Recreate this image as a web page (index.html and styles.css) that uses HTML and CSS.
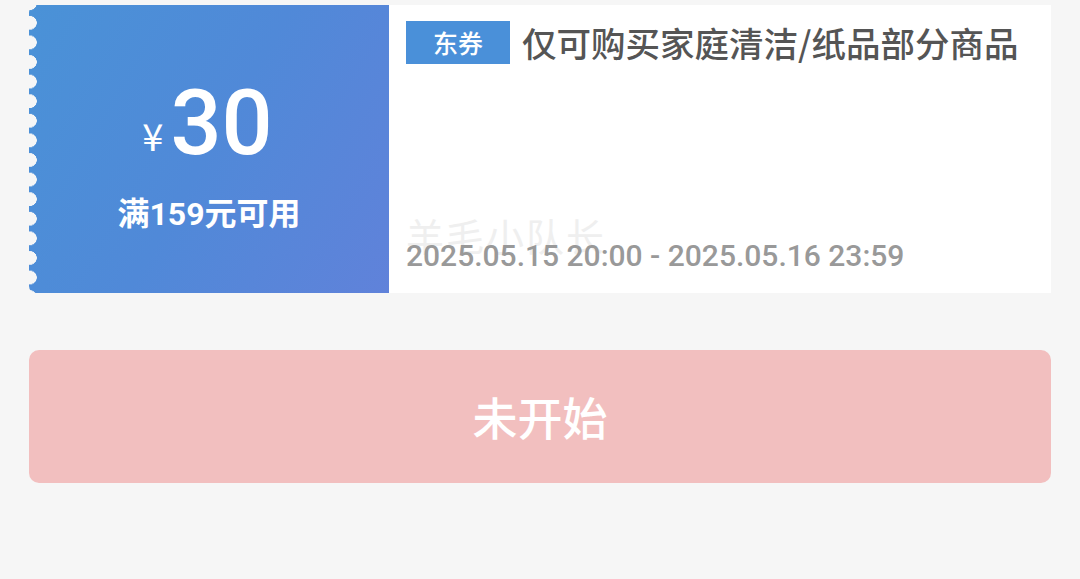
FILE: index.html
```html
<!DOCTYPE html>
<html lang="zh-CN">
<head>
    <meta charset="UTF-8">
    <meta name="viewport" content="width=device-width, initial-scale=1.0">
    <title>优惠券</title>
    <link rel="stylesheet" href="styles.css">
</head>
<body>
    <div class="coupon">
        <div class="coupon-left">
            <div class="amount"><span class="yen">¥</span><span class="num">30</span></div>
            <div class="cond">满159元可用</div>
        </div>
        <div class="coupon-right">
            <div class="title-row">
                <span class="tag">东券</span>
                <span class="title">仅可购买家庭清洁/纸品部分商品</span>
            </div>
            <div class="bottom">
                <div class="mark">羊毛小队长</div>
                <div class="date">2025.05.15 20:00 - 2025.05.16 23:59</div>
            </div>
        </div>
    </div>

    <div class="btn">未开始</div>
</body>
</html>
```

FILE: styles.css
```css
body {
    margin: 0;
    padding: 5px 29px 0;
    background: #f6f6f6;
    font-family: Roboto, "Noto Sans CJK SC", sans-serif;
}
.coupon {
    display: flex;
    height: 288px;
}
.coupon-left {
    width: 360px;
    flex-shrink: 0;
    box-sizing: border-box;
    padding-top: 74px;
    border-radius: 7px 0 0 7px;
    background:
        radial-gradient(circle at 1px 50%, #f6f6f6 6.5px, transparent 7px) left 8px / 10px 19.6px repeat-y,
        linear-gradient(120deg, #4a92d7 0%, #5089d8 50%, #6082da 100%);
    color: #fff;
    display: flex;
    flex-direction: column;
    align-items: center;
}
.amount {
    display: flex;
    align-items: baseline;
    height: 90px;
    margin-left: -3px;
}
.yen {
    font-size: 38px;
    margin-right: 7px;
    position: relative;
    top: -3px;
    font-family: "Noto Sans CJK SC", sans-serif;
}
.num {
    font-size: 90px;
    font-weight: 500;
    line-height: 90px;
}
.cond {
    font-size: 32px;
    line-height: 32px;
    font-weight: 700;
    margin-top: 29px;
}
.coupon-right {
    flex: 1;
    background: #fff;
    padding: 16px 17px 0;
    display: flex;
    flex-direction: column;
}
.title-row {
    display: flex;
    align-items: center;
}
.tag {
    background: #4a90d9;
    color: #fff;
    font-size: 25px;
    font-weight: 500;
    width: 104px;
    height: 43px;
    line-height: 43px;
    text-align: center;
    margin-right: 12px;
    font-family: "Noto Sans CJK SC", sans-serif;
}
.title {
    font-size: 34.5px;
    font-weight: 500;
    color: #555;
    font-family: "Noto Sans CJK SC", sans-serif;
    line-height: 43px;
}
.bottom {
    margin-top: auto;
    margin-bottom: 20px;
    position: relative;
}
.mark {
    position: absolute;
    left: 0;
    top: -31px;
    font-size: 38px;
    color: #efefef;
    letter-spacing: 2px;
    font-family: "Noto Sans CJK SC", sans-serif;
}
.date {
    position: relative;
    font-size: 30px;
    font-weight: 500;
    color: #999;
}
.btn {
    margin-top: 57px;
    height: 133px;
    border-radius: 10px;
    background: #f2bfbf;
    color: #fff;
    font-size: 45px;
    font-weight: 500;
    font-family: "Noto Sans CJK SC", sans-serif;
    display: flex;
    align-items: center;
    justify-content: center;
}
```
